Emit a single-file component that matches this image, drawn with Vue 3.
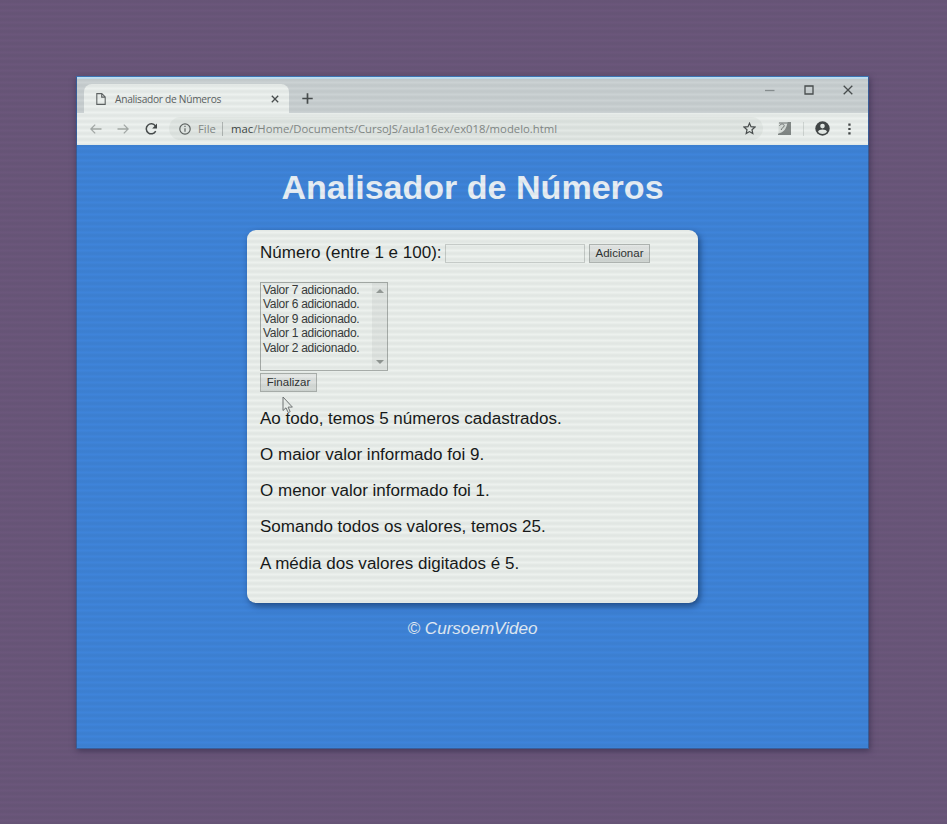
<script setup>
const values = [7, 6, 9, 1, 2]
const results = [
  'Ao todo, temos 5 números cadastrados.',
  'O maior valor informado foi 9.',
  'O menor valor informado foi 1.',
  'Somando todos os valores, temos 25.',
  'A média dos valores digitados é 5.',
]
</script>

<template>
  <div class="desktop">
    <div class="window">
      <header class="tabs">
        <div class="tab">
          <svg class="doc" width="10" height="12" viewBox="0 0 10 12"><path d="M.8.6h5l3.4 3.3v7.5H.8zM5.7.8v3.3h3.4" /></svg>
          <span class="tab-title">Analisador de Números</span>
          <svg width="8" height="8" viewBox="0 0 8 8"><path d="M.8.8l6.4 6.4M7.2.8L.8 7.2" /></svg>
        </div>
        <svg class="plus" width="11" height="11" viewBox="0 0 11 11"><path d="M5.5.3v10.4M.3 5.5h10.4" /></svg>
        <div class="controls">
          <svg width="10" height="10" viewBox="0 0 10 10"><path class="faint" d="M0 5.5h9.5" /></svg>
          <svg width="10" height="10" viewBox="0 0 10 10"><path d="M1 1h8v8H1z" /></svg>
          <svg width="10" height="10" viewBox="0 0 10 10"><path d="M.7.7l8.6 8.6M9.3.7L.7 9.3" /></svg>
        </div>
      </header>
      <nav class="toolbar">
        <svg class="pale" width="12" height="10" viewBox="0 0 12 10"><path d="M11.5 5H.8M5.2.6L.8 5l4.4 4.4" /></svg>
        <svg class="pale forward" width="12" height="10" viewBox="0 0 12 10"><path d="M.5 5h10.7M6.8.6L11.2 5 6.8 9.4" /></svg>
        <svg class="reload" width="13" height="12" viewBox="0 0 13 12"><path d="M10.7 8.2A5 5 0 1 1 10.4 3" /><path class="solid" d="M12 .6v4.9H7.2z" /></svg>
        <div class="address">
          <svg class="info" width="12" height="12" viewBox="0 0 12 12"><circle cx="6" cy="6" r="5.2" /><path d="M6 5.2v3.6M6 2.8v1.3" /></svg>
          <span class="scheme">File</span>
          <span class="bar"></span>
          <span class="url"><b>mac</b>/Home/Documents/CursoJS/aula16ex/ex018/modelo.html</span>
          <svg class="star" width="13" height="13" viewBox="0 0 13 13"><path d="M6.5 1.2l1.5 3.5 3.9.4L9 7.7l.8 3.9-3.3-2-3.3 2L4 7.7 1.1 5.1 5 4.7z" /></svg>
        </div>
        <svg class="extension" width="13" height="13" viewBox="0 0 13 13"><path class="ext-page" d="M.5.5h9v8l-4 4h-5z" /><path class="ext-bg" d="M9.3 0H13v13H0v-1.3C6 10.5 9 6 9.3 0z" /><path class="ext-line" d="M1.5 4C2 1.5 6.2 1.4 6.2 3.6S3.4 5.5 3.2 8M1 1h8" /></svg>
        <span class="divider"></span>
        <svg class="profile" width="15" height="15" viewBox="0 0 15 15"><circle class="solid" cx="7.5" cy="7.5" r="7.2" /><circle class="hole" cx="7.5" cy="5.1" r="2.3" /><path class="hole" d="M3 10.7c.7-3 8.3-3 9 0-2 3-7 3-9 0z" /></svg>
        <svg class="menu" width="3" height="12" viewBox="0 0 3 12"><path class="solid" d="M.3.5h2.3v2.2H.3zM.3 4.9h2.3v2.2H.3zM.3 9.3h2.3v2.2H.3z" /></svg>
      </nav>
      <main class="page">
        <h1>Analisador de Números</h1>
        <section class="card">
          <div class="entry">
            <label>Número (entre 1 e 100):</label>
            <input type="text" />
            <button class="add">Adicionar</button>
          </div>
          <div class="list">
            <div class="options">
              <div v-for="n in values" :key="n">Valor {{ n }} adicionado.</div>
            </div>
            <div class="scroll">
              <svg width="8" height="4" viewBox="0 0 8 4"><path d="M0 4l4-4 4 4z" /></svg>
              <svg width="8" height="4" viewBox="0 0 8 4"><path d="M0 0l4 4 4-4z" /></svg>
            </div>
          </div>
          <button class="finish">Finalizar</button>
          <div class="results">
            <p v-for="line in results" :key="line">{{ line }}</p>
          </div>
        </section>
        <footer>© CursoemVideo</footer>
      </main>
    </div>
    <svg class="cursor" width="12" height="18" viewBox="0 0 12 18"><path d="M1 1v13.5l3-2.7 2.2 4.8 2-.9-2.1-4.6h4.3z" /></svg>
    <div class="scanlines"></div>
  </div>
</template>

<style>
body { margin: 0; overflow: hidden; }
</style>

<style scoped>
* { box-sizing: border-box; }
.desktop {
  position: relative;
  width: 947px;
  height: 824px;
  padding: 76px;
  background: #6c577c;
  font-family: "Liberation Sans", Arial, sans-serif;
}
.window {
  display: flex;
  flex-direction: column;
  width: 793px;
  height: 673px;
  border: 1px solid #3a5f9c;
  border-top-color: #3d78b8;
  background: #3f85dd;
  box-shadow: 1px 2px 6px rgba(35, 25, 60, .5);
}
svg { display: block; flex: none; fill: none; stroke: #4a4e4f; stroke-width: 1.3; }
.solid { fill: #434748; stroke: none; }
.tabs {
  display: flex;
  height: 36px;
  padding-left: 7px;
  border-top: 2px solid #c4e4f8;
  background: #ced4d6;
}
.tab {
  display: flex;
  align-items: center;
  width: 205px;
  height: 29px;
  margin-top: 5px;
  padding: 0 10px 0 12px;
  border-radius: 8px 8px 0 0;
  background: #f0f4f2;
}
.doc { stroke: #606465; stroke-width: 1.1; }
.tab-title {
  flex: 1;
  margin-left: 9px;
  font: 10.2px/14px "Open Sans", "Noto Sans", sans-serif;
  letter-spacing: -.28px;
  color: #5d6263;
  white-space: nowrap;
}
.plus { margin: 14px 0 0 13px; stroke-width: 1.7; }
.controls {
  display: flex;
  gap: 29px;
  margin: 6px 15px 0 auto;
}
.faint { stroke: #8d9395; }
.toolbar {
  display: flex;
  align-items: center;
  height: 32px;
  padding: 0 17px 0 13px;
  border-bottom: 1px solid #eef5f4;
  background: #f0f4f2;
}
.pale { stroke: #a8adab; }
.forward { margin-left: 15px; }
.reload { margin-left: 16px; stroke-width: 1.5; }
.address {
  display: flex;
  align-items: center;
  width: 594px;
  height: 23px;
  margin-left: 11px;
  padding: 0 7px 0 10px;
  border-radius: 12px;
  background: #e6ebe8;
  font: 11.3px/16px "Open Sans", "Noto Sans", sans-serif;
  color: #858a88;
}
.info { stroke: #606564; stroke-width: 1.2; }
.scheme { width: 24px; margin-left: 7px; }
.bar { width: 1px; height: 14px; background: #b3b8b6; }
.url { flex: 1; margin-left: 8px; white-space: nowrap; }
.url b { font-weight: 400; color: #414645; }
.star { stroke-width: 1.2; }
.extension { margin-left: 15px; stroke: none; }
.ext-bg { fill: #858a89; }
.ext-page { fill: #dce1de; }
.extension .ext-line { fill: none; stroke: #747978; stroke-width: 1; }
.divider { width: 1px; height: 14px; margin-left: 12px; background: #d3d8d6; }
.profile { margin-left: 11px; }
.hole { fill: #e9eeeb; stroke: none; }
.menu { margin-left: auto; }
.page {
  display: flex;
  flex: 1;
  flex-direction: column;
  align-items: center;
  padding-top: 22px;
}
h1 {
  margin: 0;
  font-size: 34.05px;
  line-height: 40px;
  color: #ecf3fa;
  white-space: nowrap;
}
.card {
  width: 451px;
  height: 373px;
  margin-top: 23px;
  padding: 14px 13px;
  border-radius: 9px;
  background: #f0f4f1;
  box-shadow: 2px 3px 6px rgba(10, 35, 75, .6);
  font-size: 17.03px;
  color: #171919;
}
.entry { display: flex; align-items: center; height: 19px; }
label { width: 185px; padding-bottom: 2px; line-height: 18px; white-space: nowrap; }
input {
  width: 140px;
  height: 19px;
  padding: 0;
  border: 1px solid #c8cdca;
  background: #f0f4f1;
}
button {
  display: block;
  height: 19px;
  padding: 0;
  border: 1px solid #b0b5b2;
  background: linear-gradient(#eceeed, #d5dad7);
  font: 11.5px/17px "Liberation Sans", Arial, sans-serif;
  color: #303333;
}
.add { width: 61px; margin-left: 4px; }
.list {
  display: flex;
  width: 128px;
  height: 89px;
  margin-top: 19px;
  border: 1px solid #a9aeab;
}
.options {
  flex: 1;
  padding-left: 2px;
  font-size: 12px;
  letter-spacing: -.29px;
  line-height: 14.4px;
  color: #383b3b;
  white-space: nowrap;
}
.scroll {
  display: flex;
  flex-direction: column;
  align-items: center;
  justify-content: space-between;
  width: 15px;
  padding: 6px 0;
  background: #e5e9e6;
}
.scroll path { fill: #969b98; stroke: none; }
.finish { width: 57px; margin-top: 2px; }
.results { margin-top: 17px; }
p { margin: 0 0 16.15px; line-height: 20px; white-space: nowrap; }
footer {
  margin-top: 16px;
  font-size: 17.1px;
  font-style: italic;
  line-height: 20px;
  color: #e5effa;
}
.cursor { position: absolute; left: 282px; top: 396px; }
.cursor path { fill: #eef2ef; stroke: #737777; stroke-width: 1; }
.scanlines {
  position: absolute;
  inset: 0;
  pointer-events: none;
  background: repeating-linear-gradient(rgba(20, 40, 30, .055) 0, rgba(20, 40, 30, .065) 1.5px, rgba(20, 40, 30, .055) 3px, rgba(20, 40, 30, .015) 4px, rgba(20, 40, 30, .015) 5px, rgba(20, 40, 30, .055) 6px);
}
</style>
